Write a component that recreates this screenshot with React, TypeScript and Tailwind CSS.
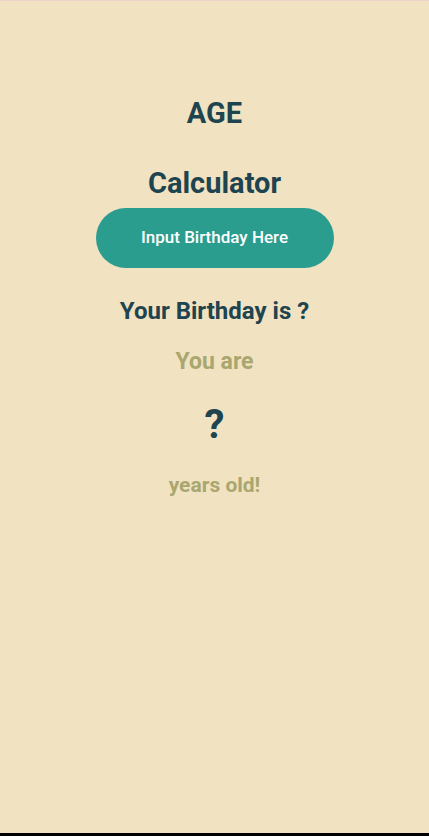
import React from "react";

const App: React.FC = (): JSX.Element => {
  return (
    <div className="h-[836px] w-full flex flex-col bg-[#f1e2c1] font-['Roboto',sans-serif]">
      <div className="h-px bg-[#ebd3cb]" />
      <div className="flex-1 flex flex-col items-center pt-[92px]">
        <div className="h-10 leading-[40px] text-[29px] font-bold text-[#1e4450]">AGE</div>
        <div className="mt-[30px] h-10 leading-[40px] text-[29px] font-bold text-[#1e4450]">Calculator</div>
        <button className="mt-[5px] w-[238px] h-[60px] rounded-full bg-[#2a9d8f] text-white text-[17px] font-medium">
          Input Birthday Here
        </button>
        <div className="mt-[28px] h-[30px] leading-[30px] text-[24px] font-bold text-[#1e4450]">Your Birthday is ?</div>
        <div className="mt-[21px] h-[30px] leading-[30px] text-[23px] font-bold text-[#a9a76f]">You are</div>
        <div className="mt-[23px] h-[50px] leading-[50px] text-[40px] font-bold text-[#1e4450]">?</div>
        <div className="mt-[20px] h-[30px] leading-[30px] text-[21px] font-bold text-[#a9a76f]">years old!</div>
      </div>
      <div className="h-[3px] bg-black" />
    </div>
  );
};

export default App;
